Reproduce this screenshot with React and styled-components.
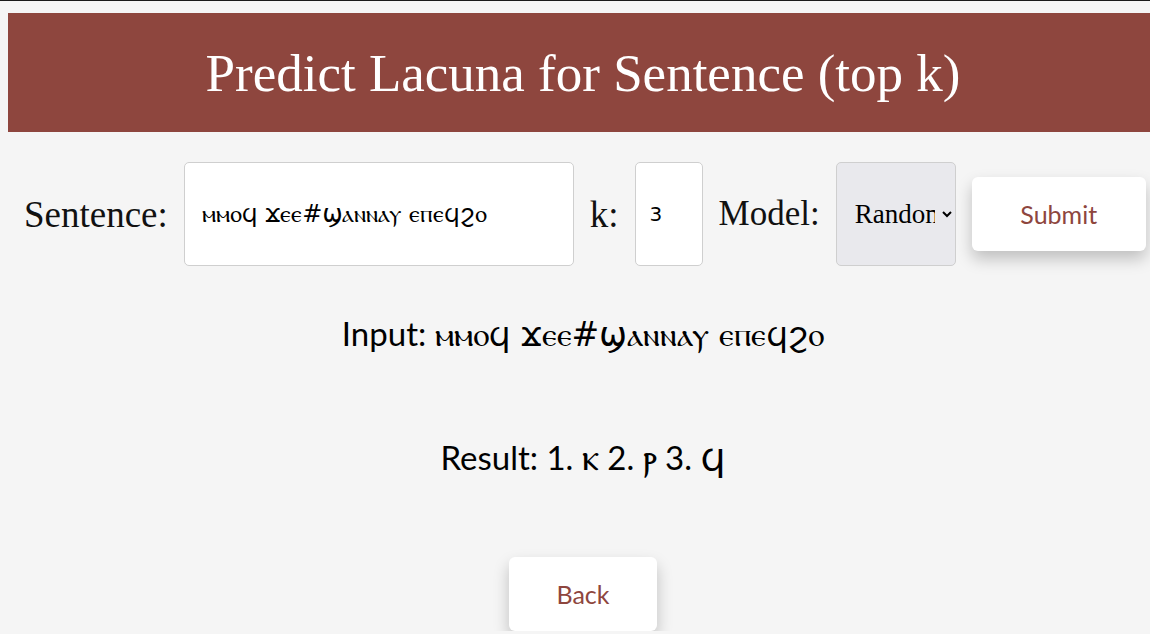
import React from "react";
import styled, { createGlobalStyle } from "styled-components";

const Global = createGlobalStyle`
  html, body { margin: 0; padding: 0; background: #f5f5f5; overflow: hidden; }
  body { border-top: 1px solid #1a1a1a; }
`;

const Page = styled.div`
  width: 100vw;
  margin: 12px 0 0 8px;
  display: flex;
  flex-direction: column;
  align-items: center;
`;

const Header = styled.header`
  align-self: stretch;
  height: 119px;
  background: #8e463e;
  display: flex;
  align-items: center;
  justify-content: center;
`;

const Title = styled.h1`
  margin: 0;
  font-family: "Liberation Serif", serif;
  font-weight: 400;
  font-size: 53px;
  color: #ffffff;
`;

const Form = styled.form`
  align-self: stretch;
  margin-top: 30px;
  padding-left: 16px;
  display: flex;
  align-items: center;
  gap: 16px;
`;

const Label = styled.label`
  font-family: "Liberation Serif", serif;
  font-size: ${(p) => p.$fs || 37}px;
  color: #111;
`;

const TextInput = styled.input`
  box-sizing: border-box;
  width: ${(p) => p.$w}px;
  height: 104px;
  padding: 0 ${(p) => p.$pad}px;
  border: 1px solid #cfcfcf;
  border-radius: 5px;
  background: #fff;
  font-family: "DejaVu Sans", "Noto Sans", sans-serif;
  font-size: ${(p) => p.$fs}px;
  color: #000;
  outline: none;
`;

const Select = styled.select`
  box-sizing: border-box;
  width: 120px;
  height: 104px;
  padding: 0 4px 0 14px;
  border: 1px solid #cfcfcf;
  border-radius: 5px;
  background: #e9e9ed;
  font-family: "Liberation Serif", serif;
  font-size: 27px;
  color: #000;
`;

const Button = styled.button`
  box-sizing: border-box;
  width: ${(p) => p.$w}px;
  height: 74px;
  border: none;
  border-radius: 6px;
  background: #fff;
  box-shadow: 0 8px 16px rgba(0, 0, 0, 0.22);
  font-family: "Lato", sans-serif;
  font-size: 25px;
  color: #8e463e;
  cursor: pointer;
`;

const Line = styled.p`
  margin: ${(p) => p.$mt}px 0 0;
  font-family: "Lato", "DejaVu Sans", sans-serif;
  font-size: 33px;
  line-height: 36px;
  color: #000;
`;

const Coptic = styled.span`
  font-family: "DejaVu Sans", "Noto Sans", sans-serif;
  font-size: ${(p) => p.$fs || 33}px;
`;

const BackWrap = styled.div`
  margin-top: 82px;
`;

const sentence = "ⲙⲙⲟϥ ϫⲉⲉ#ϣⲁⲛⲛⲁⲩ ⲉⲡⲉϥϩⲟ";

export default function App() {
  return (
    <>
      <Global />
      <Page>
        <Header>
          <Title>Predict Lacuna for Sentence (top k)</Title>
        </Header>
        <Form onSubmit={(e) => e.preventDefault()}>
          <Label>Sentence:</Label>
          <TextInput $w={390} $pad={17} $fs={24} defaultValue={sentence} />
          <Label>k:</Label>
          <TextInput $w={68} $pad={14} $fs={20} defaultValue="3" />
          <Label $fs={35}>Model:</Label>
          <Select defaultValue="Random">
            <option>Random</option>
            <option>Transformer</option>
          </Select>
          <Button type="submit" $w={174}>Submit</Button>
        </Form>
        <Line $mt={49}>
          Input: <Coptic>{sentence}</Coptic>
        </Line>
        <Line $mt={86}>
          Result: 1. <Coptic $fs={38}>ⲕ</Coptic> 2. <Coptic $fs={38}>ⲣ</Coptic> 3. <Coptic $fs={38}>ϥ</Coptic>
        </Line>
        <BackWrap>
          <Button $w={148}>Back</Button>
        </BackWrap>
      </Page>
    </>
  );
}
